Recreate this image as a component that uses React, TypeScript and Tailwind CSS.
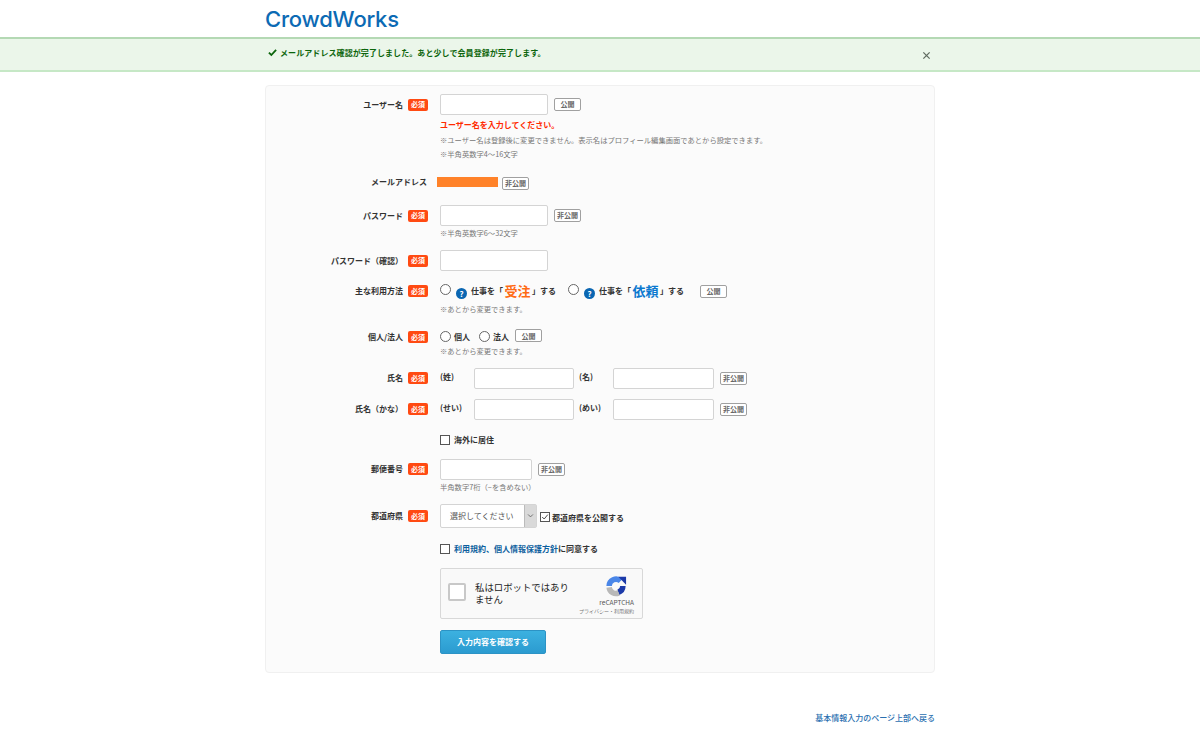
import type { ReactNode } from 'react'

const jp = '[font-family:"Noto_Sans_CJK_JP","Liberation_Sans",sans-serif]'

function Tag({ children, className = '' }: { children: ReactNode; className?: string }) {
  return (
    <span className={`flex h-[13px] w-[27px] shrink-0 items-center justify-center rounded-[2px] border border-[#a0a0a0] bg-white text-[7px] font-bold text-[#666] ${className}`}>
      {children}
    </span>
  )
}

function Badge() {
  return (
    <span className="flex h-[12px] w-[20px] shrink-0 items-center justify-center rounded-[2px] bg-[#ff4a12] text-[7px] font-bold text-white">
      必須
    </span>
  )
}

function Label({ text, h = 21 }: { text: string; h?: number }) {
  return (
    <div className="flex w-[174px] shrink-0 items-center justify-end" style={{ height: h }}>
      <span className="text-[8px] font-bold whitespace-nowrap text-[#333]">{text}</span>
      <span className="mr-[12px] ml-[5px]"><Badge /></span>
    </div>
  )
}

function Field({ className = 'w-[108px]' }: { className?: string }) {
  return <input type="text" aria-label="field" className={`h-[21px] rounded-[2px] border border-[#d4d4d4] bg-white ${className}`} />
}

function Note({ children, className = 'h-[12px]' }: { children: ReactNode; className?: string }) {
  return <p className={`flex items-center text-[7.3px] whitespace-nowrap text-[#777] ${className}`}>{children}</p>
}

function Radio() {
  return <span className="inline-block h-[11px] w-[11px] shrink-0 rounded-full border border-[#666] bg-white" />
}

function Box({ checked = false }: { checked?: boolean }) {
  return (
    <span className="flex h-[10px] w-[10px] shrink-0 items-center justify-center border border-[#555] bg-white">
      {checked && (
        <svg viewBox="0 0 10 10" className="h-[8px] w-[8px]" fill="none" stroke="#444" strokeWidth="1.2">
          <path d="M1.5 5l2.5 2.5L8.5 2" />
        </svg>
      )}
    </span>
  )
}

function Help() {
  return (
    <span className="mt-[5px] flex h-[11px] w-[11px] shrink-0 items-center justify-center rounded-full bg-[#0a66b2] text-[8px] leading-none font-bold text-white">
      ?
    </span>
  )
}

function NameRow({ label, first, second, className }: { label: string; first: string; second: string; className: string }) {
  return (
    <div className={`flex ${className}`}>
      <Label text={label} />
      <div className="flex items-start text-[8px] font-bold text-[#333]">
        <span className="h-[16px] w-[34px] pt-[3px] whitespace-nowrap">{first}</span>
        <Field className="w-[100px]" />
        <span className="ml-[5px] w-[34px] pt-[3px] whitespace-nowrap">{second}</span>
        <Field className="w-[101px]" />
        <Tag className="mt-[4px] ml-[6px]">非公開</Tag>
      </div>
    </div>
  )
}

export default function App() {
  return (
    <div className={`h-[733px] w-[1200px] overflow-hidden bg-white ${jp}`}>
      {/* Logo */}
      <div className="mx-auto h-[37px] w-[670px]">
        <div className="pt-[4px] font-['Inter',sans-serif] text-[22px] leading-[30px] font-medium tracking-[-0.2px] text-[#0c6ab4]">
          CrowdWorks
        </div>
      </div>

      {/* Alert */}
      <div className="h-[35px] border-t-2 border-b-2 border-t-[#b4d9b4] border-b-[#c6e8c6] bg-[#ebf6ea]">
        <div className="mx-auto flex h-[29px] w-[670px] items-center pl-[3px] text-[8px] font-bold tracking-[0.08px] text-[#0b650b]">
          <svg viewBox="0 0 10 10" className="mr-[3px] mb-[3px] h-[9px] w-[9px]" fill="none" stroke="#0b650b" strokeWidth="2">
            <path d="M1 5.2l2.7 2.6L9 2" />
          </svg>
          <span className="mb-[2px] flex-1">メールアドレス確認が完了しました。あと少しで会員登録が完了します。</span>
          <svg viewBox="0 0 10 10" className="mt-[3px] mr-[4px] h-[9px] w-[9px]" fill="none" stroke="#5f6b60" strokeWidth="1.4">
            <path d="M1.5 1.5l7 7M8.5 1.5l-7 7" />
          </svg>
        </div>
      </div>

      {/* Form card */}
      <div className="mx-auto mt-[13px] h-[588px] w-[670px] rounded-[4px] border border-[#f0f0f0] bg-[#fbfbfb] pt-[8px]">
        <div className="flex">
          <Label text="ユーザー名" />
          <div>
            <div className="flex items-center">
              <Field />
              <Tag className="ml-[6px]">公開</Tag>
            </div>
            <p className="mt-[4px] flex h-[12px] items-center text-[8px] font-bold text-[#ff2a00]">ユーザー名を入力してください。</p>
            <Note className="mt-[2px] h-[14px]">※ユーザー名は登録後に変更できません。表示名はプロフィール編集画面であとから設定できます。</Note>
            <Note className="h-[14px]">※半角英数字4〜16文字</Note>
          </div>
        </div>

        <div className="mt-[15px] flex">
          <div className="flex h-[12px] w-[161px] shrink-0 items-center justify-end">
            <span className="text-[8px] font-bold text-[#333]">メールアドレス</span>
          </div>
          <span className="mt-px ml-[10px] h-[10px] w-[61px] bg-[#ff8229]" />
          <Tag className="mt-px ml-[4px]">非公開</Tag>
        </div>

        <div className="mt-[15px] flex">
          <Label text="パスワード" />
          <div>
            <div className="flex items-center">
              <Field />
              <Tag className="ml-[6px]">非公開</Tag>
            </div>
            <Note className="mt-px h-[12px]">※半角英数字6〜32文字</Note>
          </div>
        </div>

        <div className="mt-[11px] flex">
          <Label text="パスワード（確認）" />
          <Field />
        </div>

        <div className="mt-[10px] flex">
          <Label text="主な利用方法" h={20} />
          <div>
            <div className="flex h-[20px] items-center text-[8px] font-bold text-[#333]">
              <span className="mb-[4px] flex"><Radio /></span>
              <span className="ml-[5px]"><Help /></span>
              <span className="ml-[4px] flex items-center whitespace-nowrap">
                仕事を「<span className="mx-[1.5px] text-[13px] text-[#ff6a13]">受注</span>」する
              </span>
              <span className="mb-[4px] ml-[12px] flex"><Radio /></span>
              <span className="ml-[5px]"><Help /></span>
              <span className="ml-[4px] flex items-center whitespace-nowrap">
                仕事を「<span className="mx-[1.5px] text-[13px] text-[#0a78cf]">依頼</span>」する
              </span>
              <Tag className="ml-[16px]">公開</Tag>
            </div>
            <Note className="mt-[3px]">※あとから変更できます。</Note>
          </div>
        </div>

        <div className="mt-[14px] flex">
          <Label text="個人/法人" h={16} />
          <div>
            <div className="flex h-[16px] items-center text-[8px] font-bold text-[#333]">
              <Radio />
              <span className="ml-[3px]">個人</span>
              <span className="ml-[9px] flex"><Radio /></span>
              <span className="ml-[3px]">法人</span>
              <Tag className="mb-[2px] ml-[6px]">公開</Tag>
            </div>
            <Note className="mt-px">※あとから変更できます。</Note>
          </div>
        </div>

        <NameRow label="氏名" first="(姓)" second="(名)" className="mt-[11px]" />
        <NameRow label="氏名（かな）" first="(せい)" second="(めい)" className="mt-[10px]" />

        <div className="mt-[14px] ml-[174px] flex h-[12px] items-center text-[8px] font-bold text-[#333]">
          <Box />
          <span className="ml-[4px]">海外に居住</span>
        </div>

        <div className="mt-[13px] flex">
          <Label text="郵便番号" />
          <div>
            <div className="flex items-center">
              <Field className="w-[92px]" />
              <Tag className="ml-[6px]">非公開</Tag>
            </div>
            <Note className="mt-[2px]">半角数字7桁（−を含めない）</Note>
          </div>
        </div>

        <div className="mt-[11px] flex">
          <Label text="都道府県" h={24} />
          <div className="flex h-[24px] items-center">
            <div className="flex h-[24px] w-[97px] rounded-[2px] border border-[#d4d4d4] bg-white text-[8px] text-[#555]">
              <span className="flex-1 pl-[9px] leading-[22px]">選択してください</span>
              <span className="flex w-[12px] items-center justify-center border-l border-[#bbb] bg-[#d9d9d9]">
                <svg viewBox="0 0 10 10" className="h-[7px] w-[7px]" fill="none" stroke="#666" strokeWidth="1.3">
                  <path d="M1.5 3.5L5 7l3.5-3.5" />
                </svg>
              </span>
            </div>
            <span className="mt-[3px] ml-[3px]"><Box checked /></span>
            <span className="mt-[5px] ml-[2px] text-[8px] font-bold text-[#333]">都道府県を公開する</span>
          </div>
        </div>

        <div className="mt-[15px] ml-[174px] flex h-[12px] items-center text-[8px] font-bold text-[#333]">
          <Box />
          <span className="ml-[4px]">
            <span className="text-[#0d5f9e]">利用規約、個人情報保護方針</span>に同意する
          </span>
        </div>

        {/* reCAPTCHA */}
        <div className="mt-[13px] ml-[174px] flex h-[51px] w-[203px] rounded-[2px] border border-[#d8d8d8] bg-[#f9f9f9]">
          <span className="mt-[14px] ml-[7px] h-[18px] w-[18px] rounded-[2px] border-2 border-[#c8c8c8] bg-white" />
          <p className="mt-[12px] ml-[9px] w-[98px] text-[9.4px] leading-[12px] text-[#222]">私はロボットではありません</p>
          <div className="ml-auto flex flex-col items-end pr-[8px]">
            <svg viewBox="0 0 24 24" className="mt-[6px] mr-[7px] h-[22px] w-[22px]" fill="none" strokeWidth="6">
              <path d="M4.5 12A7.5 7.5 0 0 1 17 6.5" stroke="#4a86e8" />
              <path d="M14.5 2h8.5v8.5z" fill="#1c3aa9" stroke="none" />
              <path d="M19.5 12a7.5 7.5 0 0 1-5 7" stroke="#1c3aa9" />
              <path d="M15 19.5a7.5 7.5 0 0 1-10.5-6" stroke="#b8b8b8" />
            </svg>
            <span className="mt-[1px] text-[6.5px] leading-[8px] whitespace-nowrap text-[#555]">reCAPTCHA</span>
            <span className="mt-[1px] text-[5px] leading-[7px] whitespace-nowrap text-[#777]">プライバシー・利用規約</span>
          </div>
        </div>

        <button
          type="button"
          className="mt-[11px] ml-[174px] flex h-[24px] w-[106px] items-center justify-center rounded-[2px] border border-[#2c93c5] bg-gradient-to-b from-[#3cb1e0] to-[#2b9bd0] text-[8px] font-bold text-white"
        >
          入力内容を確認する
        </button>
      </div>

      {/* Footer link */}
      <div className="mx-auto mt-[39px] flex h-[12px] w-[670px] items-center justify-end text-[8px] font-medium text-[#2a6fb0]">
        基本情報入力のページ上部へ戻る
      </div>
    </div>
  )
}
